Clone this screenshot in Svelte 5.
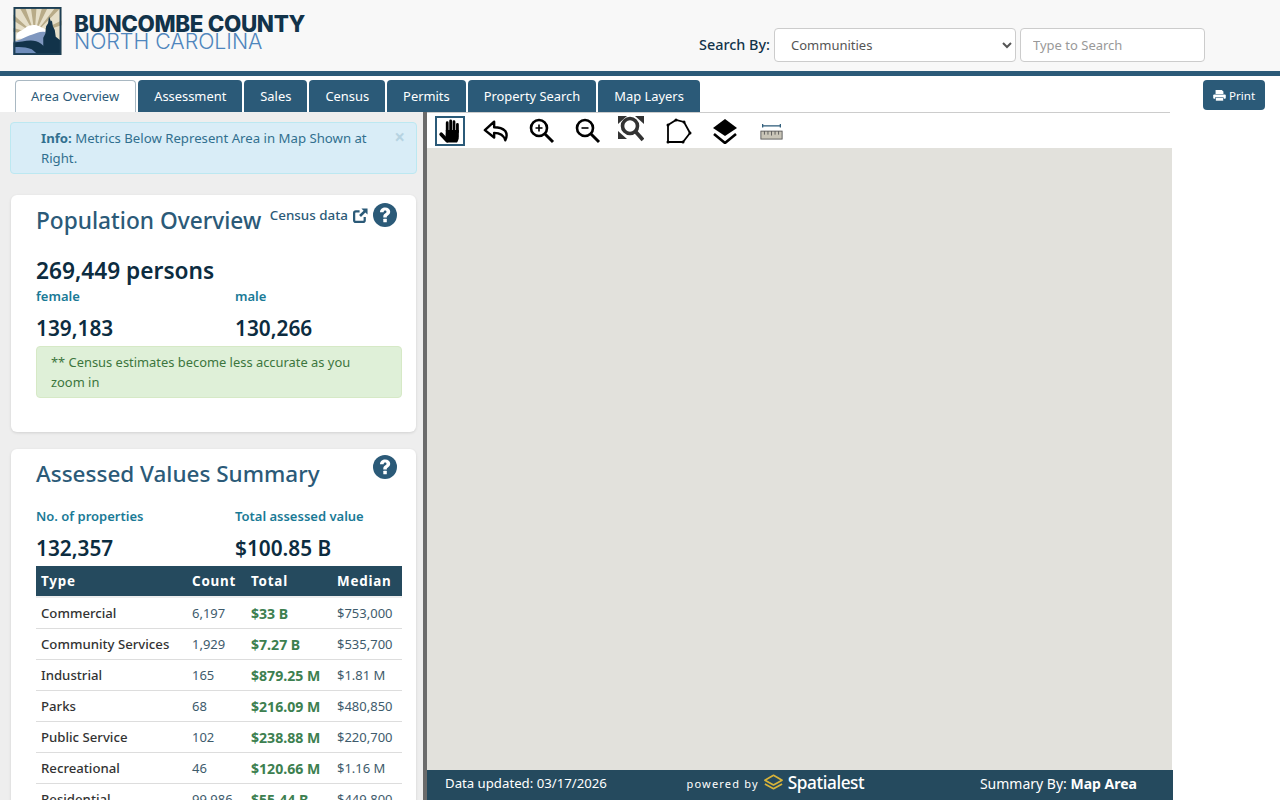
<script lang="ts">
	const tabs = ['Area Overview', 'Assessment', 'Sales', 'Census', 'Permits', 'Property Search', 'Map Layers'];

	const rows = [
		{ type: 'Commercial', count: '6,197', total: '$33 B', median: '$753,000' },
		{ type: 'Community Services', count: '1,929', total: '$7.27 B', median: '$535,700' },
		{ type: 'Industrial', count: '165', total: '$879.25 M', median: '$1.81 M' },
		{ type: 'Parks', count: '68', total: '$216.09 M', median: '$480,850' },
		{ type: 'Public Service', count: '102', total: '$238.88 M', median: '$220,700' },
		{ type: 'Recreational', count: '46', total: '$120.66 M', median: '$1.16 M' },
		{ type: 'Residential', count: '99,986', total: '$55.44 B', median: '$449,800' }
	];
</script>

{#snippet help()}
	<svg class="help" viewBox="0 0 24 24" aria-hidden="true">
		<circle cx="12" cy="12" r="12" fill="#2b5a78" />
		<path d="M7 9.300C7 6.300 9.300 4.500 12.200 4.500c2.900 0 5 1.700 5 4.200 0 1.900-1.100 2.900-2.300 3.700-.9.600-1.100.9-1.100 1.700v.5h-3.500v-.9c0-1.600.7-2.500 1.800-3.200.9-.6 1.400-1 1.400-1.700 0-.8-.6-1.200-1.300-1.200-.9 0-1.500.6-1.600 1.700z" fill="#fff" />
		<rect x="10.300" y="15.800" width="3.500" height="3.500" rx=".5" fill="#fff" />
	</svg>
{/snippet}

<header class="header">
	<div class="brand">
		<svg class="logo" viewBox="0 0 50 50" aria-hidden="true">
			<rect width="50" height="50" fill="#e6dfc9" />
			<path d="M22 28 6 0h6zM22 28 18 0h6zM22 28 30 0h6zM22 28 44 0h6zM22 28 50 14v5zM22 28 0 8v6zM22 28 0 22v4z" fill="#b8ab88" />
			<path d="M3 30c1-5 6-5 9-8 4-4 11-4 15-2 3 2 6 2 8 5v8H3z" fill="#fff" />
			<path d="M0 36c7-1 12-5 19-7 5-2 9-4 14-3l5 24H0z" fill="#7f97bf" />
			<path d="M0 37c6 0 12-2 18-2 8 0 14 4 20 15H0z" fill="#12334a" />
			<path d="M0 42c7-1 13 0 19 2l7 6H0z" fill="#6f8dbb" />
			<path d="M31 50V32l2-4 1-8 2-3 1-7 2 5 1-1 1 6 2 4 1 7 5 4v15z" fill="#12334a" />
			<rect x="1" y="1" width="48" height="48" fill="none" stroke="#1d3f55" stroke-width="2" />
		</svg>
		<div class="brand-text">
			<div class="county">BUNCOMBE COUNTY</div>
			<div class="state">NORTH CAROLINA</div>
		</div>
	</div>
	<div class="search">
		<label for="search-by">Search By:</label>
		<select id="search-by">
			<option>Communities</option>
		</select>
		<input type="text" placeholder="Type to Search" />
	</div>
</header>

<div class="tabbar">
	<ul class="tabs">
		{#each tabs as tab, i}
			<li class:active={i === 0}>{tab}</li>
		{/each}
	</ul>
	<button class="print">
		<svg viewBox="0 0 16 14" aria-hidden="true">
			<path d="M3 0h8l2 2v3H3z" fill="#fff" />
			<rect y="5.800" width="16" height="5.200" rx="1.200" fill="#fff" />
			<rect x="3" y="9.800" width="10" height="4.200" fill="#fff" stroke="#2b5a78" stroke-width=".8" />
		</svg>
		Print
	</button>
</div>

<main class="main">
	<aside class="side">
		<div class="alert">
			<span><b>Info:</b> Metrics Below Represent Area in Map Shown at Right.</span>
			<span class="close">×</span>
		</div>

		<section class="card population">
			<div class="card-head">
				<h2>Population Overview</h2>
				<div class="head-links">
					<span>Census data</span>
					<svg class="ext" viewBox="0 0 16 16" aria-hidden="true">
						<path d="M12.500 9.500V13a1.800 1.800 0 0 1-1.800 1.800H3A1.800 1.800 0 0 1 1.200 13V5.300A1.800 1.800 0 0 1 3 3.500h4" fill="none" stroke="#2b5a78" stroke-width="2.400" />
						<path d="M9 .5h6.500V7l-2.300-2.300-4.700 4.800L6.500 7.500l4.800-4.700z" fill="#2b5a78" />
					</svg>
					{@render help()}
				</div>
			</div>
			<div class="persons">269,449 persons</div>
			<div class="stats">
				<div>
					<div class="stat-label">female</div>
					<div class="stat-value">139,183</div>
				</div>
				<div>
					<div class="stat-label">male</div>
					<div class="stat-value">130,266</div>
				</div>
			</div>
			<div class="note">** Census estimates become less accurate as you zoom in</div>
		</section>

		<section class="card assessed">
			<div class="card-head">
				<h2>Assessed Values Summary</h2>
				<div class="head-links">{@render help()}</div>
			</div>
			<div class="stats">
				<div>
					<div class="stat-label">No. of properties</div>
					<div class="stat-value">132,357</div>
				</div>
				<div>
					<div class="stat-label">Total assessed value</div>
					<div class="stat-value">$100.85 B</div>
				</div>
			</div>
			<table>
				<thead>
					<tr>
						<th>Type</th>
						<th>Count</th>
						<th>Total</th>
						<th>Median</th>
					</tr>
				</thead>
				<tbody>
					{#each rows as row}
						<tr>
							<td class="type">{row.type}</td>
							<td>{row.count}</td>
							<td class="total">{row.total}</td>
							<td>{row.median}</td>
						</tr>
					{/each}
				</tbody>
			</table>
		</section>
	</aside>

	<div class="divider"></div>

	<section class="map-area">
		<div class="toolbar">
			<span class="tool selected">
				<svg viewBox="0 0 24 28" aria-hidden="true">
					<path d="M9 14V5M12.700 13V3M16.300 13V4M20 15V7" stroke="#000" stroke-width="3" stroke-linecap="round" />
					<path d="M7.500 13h14v7c0 3-1 5-2 6.500H9.500L7 24z" fill="#000" />
					<path d="m2.500 17.500 6.500 7" stroke="#000" stroke-width="4" stroke-linecap="round" />
				</svg>
			</span>
			<span class="tool">
				<svg viewBox="0 0 28 24" aria-hidden="true">
					<path d="M12 2 2 11l10 8v-5c5 0 10 1 12 8 2-4 2-7 0-10-2-2-7-4-12-4z" fill="#fff" stroke="#000" stroke-width="2.600" stroke-linejoin="round" />
				</svg>
			</span>
			<span class="tool">
				<svg viewBox="0 0 26 26" aria-hidden="true">
					<circle cx="10" cy="10" r="8" fill="none" stroke="#000" stroke-width="2.600" />
					<path d="M6.500 10h7M10 6.500v7" stroke="#000" stroke-width="1.600" />
					<path d="m16 16 8 8" stroke="#000" stroke-width="3" />
				</svg>
			</span>
			<span class="tool">
				<svg viewBox="0 0 26 26" aria-hidden="true">
					<circle cx="10" cy="10" r="8" fill="none" stroke="#000" stroke-width="2.600" />
					<path d="M6.500 10h7" stroke="#000" stroke-width="1.600" />
					<path d="m16 16 8 8" stroke="#000" stroke-width="3" />
				</svg>
			</span>
			<span class="tool extent">
				<svg viewBox="0 0 26 26" aria-hidden="true">
					<path d="M0 0h9L0 8zM26 0h-9l9 8zM0 23v-8l9 8z" fill="#333" />
					<circle cx="12" cy="10" r="7.500" fill="none" stroke="#333" stroke-width="3.600" />
					<path d="m17 15 8 9" stroke="#333" stroke-width="3.800" />
				</svg>
			</span>
			<span class="tool">
				<svg viewBox="0 0 26 26" aria-hidden="true">
					<path d="M2 7 10 2l8 2 6 11-7 9H2z" fill="none" stroke="#000" stroke-width="1.800" />
					<path d="M2 7h.01M10 2h.01M18 4h.01M24 15h.01M17 24h.01M2 24h.01" stroke="#000" stroke-width="3" stroke-linecap="round" />
				</svg>
			</span>
			<span class="tool">
				<svg viewBox="0 0 26 26" aria-hidden="true">
					<path d="m13 1 12 9-12 8L1 10z" fill="#000" />
					<path d="m2 16 11 9 11-9" fill="none" stroke="#000" stroke-width="2.600" />
				</svg>
			</span>
			<span class="tool ruler">
				<svg viewBox="0 0 26 20" aria-hidden="true">
					<path d="M3 3h20M3 1v4M23 1v4" stroke="#2b5a78" stroke-width="1.400" />
					<rect x="1" y="9" width="24" height="9" fill="#c9c5b8" stroke="#555" />
					<path d="M5 9v4M9 9v4M13 9v5M17 9v4M21 9v4" stroke="#555" />
				</svg>
			</span>
		</div>
		<div class="map"></div>
		<footer class="map-footer">
			<span class="updated">Data updated: 03/17/2026</span>
			<span class="powered">
				<span class="by">powered by</span>
				<svg viewBox="0 0 22 18" aria-hidden="true">
					<path d="m11 1 9 5-9 5-9-5zM2 10l9 5 9-5" fill="none" stroke="#d8b43a" stroke-width="1.800" stroke-linejoin="round" />
				</svg>
				<span class="spatialest">Spatialest</span>
			</span>
			<span>Summary By: <b>Map Area</b></span>
		</footer>
	</section>
</main>

<style>
	:global(body) {
		margin: 0;
		font-family: 'Noto Sans', 'Open Sans', sans-serif;
		color: #12334a;
		background: #fff;
		overflow: hidden;
	}

	.header {
		height: 71px;
		background: #f8f8f8;
		border-bottom: 5px solid #2b5a78;
		display: flex;
		justify-content: space-between;
		box-sizing: content-box;
	}

	.brand {
		display: flex;
		align-items: flex-start;
		gap: 12px;
		padding: 7px 0 0 13px;
	}

	.logo {
		width: 49px;
		height: 48px;
	}

	.brand-text {
		padding-top: 7px;
		font-family: Inter, 'Liberation Sans', sans-serif;
		line-height: 19px;
	}

	.county {
		font-size: 22.4px;
		font-weight: 800;
		letter-spacing: -0.35px;
		color: #12334a;
	}

	.state {
		font-size: 21.3px;
		font-weight: 300;
		color: #4f86bd;
		margin-top: -1px;
	}

	.search {
		display: flex;
		align-items: center;
		gap: 4px;
		padding: 28px 75px 0 0;
		height: 34px;
		font-size: 14.4px;
	}

	.search label {
		font-weight: 500;
		position: relative;
		top: -1px;
	}

	.search select,
	.search input {
		box-sizing: border-box;
		height: 34px;
		border: 1px solid #ccc;
		border-radius: 4px;
		background: #fff;
		font-family: inherit;
		font-size: 13px;
		color: #555;
	}

	.search select {
		width: 242px;
		padding-left: 12px;
	}

	.search input {
		width: 185px;
		padding: 0 12px;
	}

	.search input::placeholder {
		color: #999;
	}

	.tabbar {
		display: flex;
		justify-content: space-between;
		height: 32px;
		padding: 4px 15px 0 15px;
	}

	.tabs {
		display: flex;
		gap: 2px;
		list-style: none;
		margin: 0;
		padding: 0;
	}

	.tabs li {
		box-sizing: border-box;
		height: 32px;
		padding: 0 16px 1px;
		display: flex;
		align-items: center;
		font-size: 12.9px;
		color: #fff;
		background: #2b5a78;
		border-radius: 4px 4px 0 0;
	}

	.tabs li.active {
		background: #fff;
		color: #2b5a78;
		border: 1px solid #a9b8c2;
		border-bottom: none;
		font-size: 13px;
		padding: 0 16px 1px 15px;
	}

	.print {
		box-sizing: border-box;
		height: 30px;
		width: 62px;
		border: none;
		border-radius: 4px;
		background: #2b5a78;
		color: #fff;
		font-family: inherit;
		font-size: 11.6px;
		display: flex;
		align-items: center;
		justify-content: center;
		gap: 3px;
		padding: 0;
	}

	.print svg {
		width: 13px;
		height: 11px;
	}

	.main {
		display: flex;
		height: 688px;
	}

	.side {
		width: 423px;
		box-sizing: border-box;
		background: #eee;
		padding: 10px 6px 0 10px;
		overflow: hidden;
	}

	.alert {
		box-sizing: border-box;
		height: 52px;
		background: #d9edf7;
		border: 1px solid #bce8f1;
		border-radius: 4px;
		padding: 5px 11px 0 30px;
		font-size: 13.2px;
		line-height: 20px;
		color: #31708f;
		display: flex;
		justify-content: space-between;
		gap: 14px;
		margin-bottom: 21px;
	}

	.close {
		font-size: 19px;
		font-weight: 700;
		line-height: 18px;
		color: #31708f;
		opacity: 0.2;
	}

	.card {
		background: #fff;
		border-radius: 6px;
		box-shadow: 0 1px 3px rgba(0, 0, 0, 0.12);
		padding: 0 14px 0 25px;
		margin: 0 1px 17px 1px;
	}

	.population {
		height: 237px;
	}

	.population .stat-value {
		margin-top: 7px;
	}

	.card-head {
		display: flex;
		justify-content: space-between;
		align-items: flex-start;
	}

	h2 {
		margin: 0;
		font-size: 22.7px;
		font-weight: 500;
		color: #2b5a78;
		line-height: 32px;
		padding-top: 10px;
	}

	.assessed h2 {
		padding-top: 9px;
		font-size: 22.5px;
	}

	.head-links {
		display: flex;
		align-items: center;
		gap: 5px;
		padding: 8px 5px 0 0;
		height: 24px;
		font-size: 13.4px;
		color: #2b5a78;
		font-weight: 500;
	}

	.ext {
		width: 15px;
		height: 15px;
	}

	.help {
		width: 24px;
		height: 24px;
	}

	.persons {
		font-size: 22.7px;
		font-weight: 600;
		line-height: 30px;
		margin-top: 19px;
		margin-bottom: -1px;
		color: #0c2c40;
	}

	.stats {
		display: grid;
		grid-template-columns: 199px 1fr;
	}

	.stat-label {
		font-size: 13px;
		font-weight: 600;
		color: #1a7a96;
		line-height: 20px;
		padding-top: 1px;
	}

	.stat-value {
		font-size: 20.8px;
		font-weight: 600;
		line-height: 30px;
		margin-top: 7px;
		color: #0c2c40;
	}

	.note {
		box-sizing: border-box;
		height: 52px;
		background: #dff0d8;
		border: 1px solid #d6e9c6;
		border-radius: 4px;
		padding: 5px 14px;
		font-size: 12.9px;
		line-height: 20px;
		color: #3c763d;
		margin-top: 3px;
	}

	.assessed {
		margin-bottom: 0;
	}

	.assessed .stats {
		margin-top: 15px;
	}

	.assessed .head-links {
		padding-top: 6px;
	}

	table {
		width: 366px;
		border-collapse: collapse;
		table-layout: fixed;
		margin-top: 3px;
		font-size: 13px;
	}

	th {
		background: #254a5e;
		color: #fff;
		font-weight: 700;
		font-size: 13.4px;
		text-align: left;
		height: 30px;
		padding: 0 0 0 5px;
		letter-spacing: 0.8px;
		border-bottom: 2px solid #eee;
	}

	td {
		height: 30px;
		padding: 0 0 0 5px;
		border-bottom: 1px solid #ddd;
		color: #3e5b6c;
		white-space: nowrap;
	}

	th:nth-child(1) {
		width: 146px;
	}

	th:nth-child(2) {
		width: 59px;
		padding-left: 5px;
	}

	th:nth-child(3) {
		width: 86px;
		padding-left: 0;
	}

	th:nth-child(4) {
		padding-left: 0;
	}

	td:nth-child(3),
	td:nth-child(4) {
		padding-left: 0;
	}

	.type {
		font-weight: 500;
		font-size: 13.2px;
		color: #333;
	}

	td.total {
		font-weight: 700;
		font-size: 14.1px;
		color: #3d8050;
	}

	.divider {
		width: 4px;
		background: #6b6b6b;
	}

	.map-area {
		width: 746px;
		display: flex;
		flex-direction: column;
	}

	.toolbar {
		height: 36px;
		display: flex;
		align-items: center;
		gap: 15.9px;
		padding-left: 8px;
		margin-right: 3px;
		box-sizing: border-box;
		border-top: 1px solid #ccc;
	}

	.tool {
		width: 30px;
		height: 30px;
		box-sizing: border-box;
		display: flex;
		align-items: center;
		justify-content: center;
	}

	.tool svg {
		width: 26px;
		height: 26px;
	}

	.tool.extent {
		position: relative;
		left: -3px;
		top: -2px;
	}

	.tool.ruler svg {
		width: 23px;
		height: 18px;
		margin-top: 2px;
	}

	.tool.selected {
		border: 2px solid #2b5a78;
	}

	.map {
		flex: 1;
		background: #e2e1dc;
		margin-right: 1px;
	}

	.map-footer {
		height: 30px;
		box-sizing: border-box;
		background: #254a5e;
		color: #fff;
		display: flex;
		justify-content: space-between;
		align-items: center;
		padding: 0 36px 4px 18px;
		font-size: 14px;
	}

	.updated {
		font-size: 13.2px;
	}

	.powered {
		display: flex;
		align-items: center;
		gap: 4px;
		margin-right: 36px;
	}

	.powered svg {
		width: 21px;
		height: 18px;
	}

	.by {
		font-size: 11px;
		letter-spacing: 1.2px;
	}

	.spatialest {
		font-size: 17.2px;
		font-weight: 500;
		letter-spacing: -0.4px;
		color: #fff;
		position: relative;
		top: -1px;
	}
</style>
